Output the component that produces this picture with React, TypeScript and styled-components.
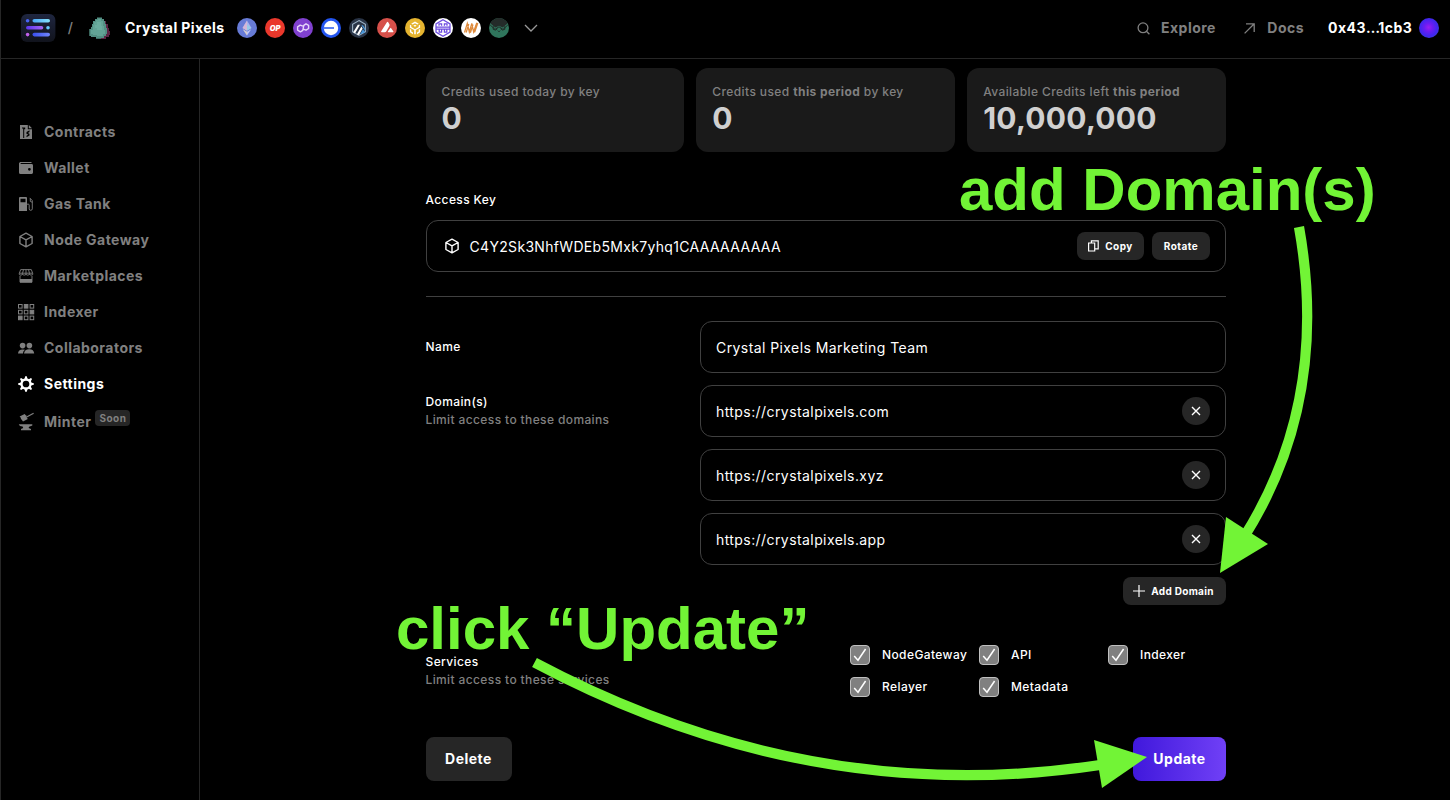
import React from "react";
import styled, { createGlobalStyle } from "styled-components";

const GlobalStyle = createGlobalStyle`
  *, *::before, *::after { box-sizing: border-box; }
  html, body { margin: 0; padding: 0; background: #000; }
  body { overflow: hidden; }
  button, input { font: inherit; letter-spacing: inherit; color: inherit; margin: 0; }
`;

const Page = styled.div`
  position: relative;
  width: 1450px;
  height: 800px;
  overflow: hidden;
  display: flex;
  flex-direction: column;
  background: #000;
  border-left: 1px solid #262626;
  color: #fff;
  font-family: Inter, "Liberation Sans", sans-serif;
  font-size: 14px;
  letter-spacing: 0.47px;
`;

/* ---------- header ---------- */

const Header = styled.header`
  flex: none;
  height: 59px;
  padding: 0 11px 2px 20px;
  display: flex;
  align-items: center;
  border-bottom: 1px solid #262626;
`;

const Slash = styled.span`
  width: 31px;
  padding: 0 2px 2px 0;
  text-align: center;
  color: #808080;
  font-weight: 500;
`;

const ProjectName = styled.span`
  margin-left: 14px;
  padding-bottom: 2px;
  width: 112px;
  font-weight: 700;
  letter-spacing: 0.42px;
  white-space: nowrap;
`;

const Chains = styled.div`
  display: flex;
  gap: 8px;
  margin-right: 15px;
`;

const HeaderRight = styled.nav`
  margin-left: auto;
  display: flex;
  align-items: center;
`;

const HeaderLink = styled.a<{ $gap: number; $end: number }>`
  display: flex;
  align-items: center;
  gap: ${(p) => p.$gap}px;
  margin-right: ${(p) => p.$end}px;
  color: #808080;
  font-weight: 700;
`;

const Raised = styled.span`
  padding-bottom: 2px;
`;

const Account = styled.div`
  display: flex;
  align-items: center;
  gap: 8px;
  font-weight: 700;
  white-space: nowrap;
`;

const Address = styled(Raised)`
  width: 83px;
`;

const Ellipsis = styled.span`
  letter-spacing: -1.8px;
`;

const Avatar = styled.span`
  width: 20px;
  height: 20px;
  border-radius: 50%;
  background: radial-gradient(circle at 48% 47%, #9a1ff0 0%, #6a1cf2 28%, #4126ee 58%, #3a50c0 100%);
`;

/* ---------- body ---------- */

const Body = styled.div`
  flex: 1;
  display: flex;
  min-height: 0;
`;

const Sidebar = styled.aside`
  width: 199px;
  border-right: 1px solid #262626;
  padding: 55px 0 0 15px;
  display: flex;
  flex-direction: column;
`;

const NavItem = styled.a<{ $active?: boolean }>`
  display: flex;
  align-items: center;
  height: 36px;
  gap: 8px;
  font-weight: 700;
  color: ${(p) => (p.$active ? "#fff" : "#808080")};
  svg { flex: none; }
`;

const MinterItem = styled(NavItem)`
  height: 40px;
`;

const MinterLabel = styled.span`
  display: flex;
  gap: 4px;
  align-items: flex-start;
  line-height: 18px;
  padding-bottom: 2px;
`;

const MinterText = styled.span`
  padding-top: 1px;
`;

const Soon = styled.span`
  width: 35px;
  height: 16px;
  margin-top: -2px;
  border-radius: 4px;
  background: #262626;
  font-size: 10px;
  line-height: 16px;
  text-align: center;
`;

const Main = styled.main`
  width: 800.5px;
  margin-left: 225.5px;
  padding-top: 9px;
  display: flex;
  flex-direction: column;
`;

const Cards = styled.section`
  display: grid;
  grid-template-columns: repeat(3, 1fr);
  gap: 12px;
`;

const Card = styled.div`
  height: 84px;
  padding: 14px 16px;
  border-radius: 12px;
  background: #1a1a1a;
`;

const CardLabel = styled.div`
  font-size: 12px;
  line-height: 19px;
  font-weight: 500;
  letter-spacing: 0.4px;
  color: #808080;
  white-space: nowrap;
  b { font-weight: 700; }
`;

const CardValue = styled.div`
  font-size: 30px;
  line-height: 34px;
  font-weight: 700;
  letter-spacing: 0.25px;
  color: #d0d0d0;
`;

const Label = styled.div`
  font-size: 12px;
  line-height: 18px;
  font-weight: 500;
  letter-spacing: 0.38px;
`;

const Hint = styled(Label)`
  color: #808080;
`;

const KeySection = styled.section`
  padding-top: 39px;
`;

const Field = styled.div`
  height: 52px;
  border: 1px solid #404040;
  border-radius: 12px;
  padding: 0 15px;
  display: flex;
  align-items: center;
  letter-spacing: 0.42px;
`;

const KeyField = styled(Field)`
  margin-top: 11px;
  gap: 8px;
`;

const KeyValue = styled.span`
  flex: 1;
  padding-top: 1px;
  letter-spacing: 0.32px;
`;

const SmallButton = styled.button<{ $width: number }>`
  width: ${(p) => p.$width}px;
  height: 28px;
  padding: 0;
  border: 0;
  border-radius: 8px;
  background: #262626;
  display: flex;
  align-items: center;
  justify-content: center;
  gap: 6px;
  font-size: 10px;
  font-weight: 700;
  letter-spacing: 0.45px;
`;

const Divider = styled.hr`
  width: 100%;
  height: 1px;
  margin: 24px 0;
  border: 0;
  background: #404040;
`;

const FormRow = styled.div`
  display: flex;
  justify-content: space-between;
`;

const LabelCell = styled.div<{ $top: number }>`
  padding-top: ${(p) => p.$top}px;
`;

const Fields = styled.div`
  width: 526px;
  display: flex;
  flex-direction: column;
  align-items: stretch;
  gap: 12px;
`;

const Input = styled.input`
  flex: 1;
  min-width: 0;
  padding: 0;
  border: 0;
  outline: 0;
  background: transparent;
`;

const RemoveButton = styled.button`
  width: 28px;
  height: 28px;
  padding: 0;
  border: 0;
  border-radius: 50%;
  background: #262626;
  display: grid;
  place-items: center;
`;

const AddButton = styled(SmallButton)`
  align-self: flex-end;
  padding-right: 2px;
  letter-spacing: 0.3px;
`;

const DomainRow = styled(FormRow)`
  margin-top: 12px;
`;

const ServicesRow = styled(FormRow)`
  margin-top: 40px;
  height: 52px;
`;

const Checks = styled.div`
  width: 376px;
  display: grid;
  grid-template-columns: 129px 129px 1fr;
  grid-auto-rows: 20px;
  row-gap: 12px;
`;

const Check = styled.label`
  display: flex;
  align-items: center;
  gap: 12px;
  font-size: 12px;
  font-weight: 500;
  letter-spacing: 0.4px;
`;

const Box = styled.span`
  width: 20px;
  height: 20px;
  border: 1px solid #c0c0c0;
  border-radius: 4px;
  background: #808080;
  display: grid;
  place-items: center;
`;

const Actions = styled.div`
  margin-top: 40px;
  display: flex;
  justify-content: space-between;
`;

const ActionButton = styled.button<{ $primary?: boolean }>`
  width: ${(p) => (p.$primary ? 93 : 86)}px;
  height: 44px;
  padding: 0 0 2px;
  border: 0;
  border-radius: 8px;
  font-weight: 700;
  letter-spacing: 0.5px;
  background: ${(p) => (p.$primary ? "linear-gradient(90deg, #4018dc, #7040f6)" : "#262626")};
`;

/* ---------- annotations floating over the page ---------- */

const Note = styled.div<{ $x: number; $y: number }>`
  position: absolute;
  left: ${(p) => p.$x}px;
  top: ${(p) => p.$y}px;
  font: 700 60px/68px "Liberation Sans", sans-serif;
  letter-spacing: 0;
  color: #72f436;
  white-space: nowrap;
`;

const Arrows = styled.svg`
  position: absolute;
  left: -1px;
  top: 0;
  pointer-events: none;
`;

/* ---------- icons ---------- */

const Logo = () => (
  <svg width="35" height="28" viewBox="0 0 35 28">
    <defs>
      <linearGradient id="lg" x1="0" y1="0" x2="0" y2="1"><stop stopColor="#1f2640" /><stop offset="1" stopColor="#11131c" /></linearGradient>
      <linearGradient id="l1"><stop stopColor="#4aa8f8" /><stop offset="1" stopColor="#86e4fc" /></linearGradient>
      <linearGradient id="l2"><stop stopColor="#5b35ee" /><stop offset="1" stopColor="#a666f4" /></linearGradient>
      <linearGradient id="l3"><stop stopColor="#3a50f0" /><stop offset="1" stopColor="#7186fa" /></linearGradient>
    </defs>
    <rect width="34.4" height="28" rx="6" fill="url(#lg)" />
    <circle cx="6.6" cy="6.8" r="1.8" fill="#4864f4" />
    <rect x="11.5" y="5" width="17.5" height="3.6" rx="1.8" fill="url(#l1)" />
    <rect x="5" y="12" width="17.3" height="3.6" rx="1.8" fill="url(#l2)" />
    <circle cx="27" cy="13.8" r="1.8" fill="#66c8fa" />
    <circle cx="6.6" cy="20.6" r="1.8" fill="#c060ea" />
    <rect x="11.5" y="18.8" width="17.5" height="3.6" rx="1.8" fill="url(#l3)" />
  </svg>
);

const Gem = () => (
  <svg width="24" height="24" viewBox="0 0 24 24">
    <path d="M14 3h3v2h2v3h2v4h1v3h1v4h-1v2h-3v2h-5z" fill="#5c2444" />
    <path d="M10 1.5h5V3h2v2h1v3h1v4h1v6h-1v2h-2v2h-3v.8H9V21H4v-1H2.3v-7H4v-2h1V8h1V5h2V3h2z" fill="#528f83" />
    <path d="M11 3h3v2h2v5h1v4h1v4h-2v2h-6v-1H6v-1H4v-4h2V9h1V6h2V4h2z" fill="#62a395" />
    <path d="M10 6h4v4h1v4h-5v-2H8V9h2z" fill="#6aac9e" />
  </svg>
);

const Coin = ({ bg, children }: { bg: string; children: React.ReactNode }) => (
  <svg width="20" height="20" viewBox="0 0 20 20"><circle cx="10" cy="10" r="10" fill={bg} />{children}</svg>
);

const OpText = styled.text`
  font: italic 900 7.5px Inter, sans-serif;
  letter-spacing: 0;
`;

const ChainIcons = () => (
  <Chains>
    <Coin bg="#677bd6">
      <path d="M10 2.5 14.5 10 10 12.7 5.5 10z" fill="#aab4ee" /><path d="M10 2.5v10.2L5.5 10z" fill="#e2b7d0" opacity=".75" />
      <path d="M10 6.5l4.5 3.5L10 12.7z" fill="#8adbe2" opacity=".6" /><path d="M5.8 11.2 10 13.8l4.2-2.6L10 17.4z" fill="#c0c6f6" /><path d="M10 13.8v3.6l-4.2-6.2z" fill="#e6d4ae" opacity=".6" />
    </Coin>
    <Coin bg="#ea382c"><OpText x="10" y="12.8" textAnchor="middle" fill="#fff">OP</OpText></Coin>
    <Coin bg="#8040cf">
      <path d="M9.9 8.2 7.2 7.2 4.6 8.9v3.2l2.8 1.7 2.4-1.5 1-5 2.2-1.5 2.6 1.5v3.2l-2.6 1.7-2.7-1.1" fill="none" stroke="#e6d5fa" strokeWidth="1.4" strokeLinejoin="round" />
    </Coin>
    <Coin bg="#2355f0"><circle cx="10" cy="10" r="7.2" fill="#fff" /><rect x="2.6" y="9.1" width="10.4" height="1.8" fill="#4c74f0" /></Coin>
    <Coin bg="#293446">
      <path d="M10 2.6 16.4 6.3v7.4L10 17.4 3.6 13.7V6.3z" fill="none" stroke="#9ab0c4" strokeWidth="1.1" />
      <path d="M4.2 14.2 8.8 6.8h2.2L6 15.4zM7.8 16.4 12.4 8.6l1.2 1.9-3.6 6.5z" fill="#fff" /><path d="M11 16.5l2.9-5.3 2.3 3.1zM12.4 7.2h1.6l2.2 3.6v2z" fill="#4898dc" />
    </Coin>
    <Coin bg="#d6504a"><path d="M9.9 4.2q.7-1 1.3 0l1.2 2.1q.4.8 0 1.6l-3.2 5.6q-.5.8-1.3.8H4.8q-1.2 0-.6-1.1zM13.2 10.2q.5-.8 1 0l2.1 3.1q.5 1-.5 1h-4.3q-1.1 0-.5-1z" fill="#fff" /></Coin>
    <Coin bg="#e5b42f">
      <path d="M10 3.6l3.8 2.1-1.4.9L10 5.3 7.6 6.6l-1.4-.9zM4.9 6.7l1.4.8v1.6L10 11.2l3.7-2.1V7.5l1.4-.8v3L10.8 12v4l-.8.6-.8-.6v-4L4.9 9.7zM4.9 11l1.4.8v1.8l1.7 1v1.6L4.9 14.3zM15.1 11l-1.4.8v1.8l-1.7 1v1.6l3.1-1.9zM10 6.8l1.6.9L10 8.7l-1.6-1z" fill="#fff" />
    </Coin>
    <Coin bg="#fff">
      <g fill="none" stroke="#6c4be0" strokeWidth="1.25"><path d="M10 1.8 17 5.9v8.2l-7 4.1-7-4.1V5.9z" /><path d="M3 9h14M3 11.2h14M6 7.8V5.8h2.6v2M11.4 7.8v-2H14v2M6.2 11.5v2.7h2.4v-2.7M11.4 11.5v2.7h2.4v-2.7" /></g>
    </Coin>
    <Coin bg="#fff">
      <g fill="none" stroke="#de8a3c" strokeWidth="1.25"><path d="M3.5 14.5 6.3 5.3l2 8.7L10.8 5.3l1.8 8.7 3.2-9.2M5.2 14.5 7.8 6M9.4 14.8 12 6.5M13.6 14.4 16.8 5" /></g>
    </Coin>
    <Coin bg="#2f755c">
      <path d="M2 4.1A10 10 0 0 1 18 4.1l.8 1.4L14 9.8 10 7.8 6 9.8 1.2 5.5z" fill="#242b29" />
      <path d="M1 5.6 7.2 10.6l2.8-2 2.8 2L19 5.6" fill="none" stroke="#2f755c" strokeWidth=".8" />
      <path d="M1.2 7 6 11.4l4-2.6 4 2.6L18.8 7M4.2 8.2v3.1l2.3.8 1.9-1.4M15.8 8.2v3.1l-2.3.8-1.9-1.4M8.9 12.6 10 13.8l1.1-1.2" fill="none" stroke="#202b27" strokeWidth="1" />
    </Coin>
  </Chains>
);

const Icon = ({ children }: { children: React.ReactNode }) => (
  <svg width="20" height="20" viewBox="0 0 20 20" fill="currentColor">{children}</svg>
);

const ContractsIcon = () => (
  <Icon>
    <path fillRule="evenodd" d="M4 3h7.8v4.2H16V17H4zM6 5.5v1h1.2V16h1V7.2h1V5.5zM13.5 8.2l-3 1.9v1.8l1.8.6-1.8 1.2v1.6l3-1.9v-1.6l-1.6-.7 1.6-1z" /><path d="M12.8 3 16 6.2h-3.2z" />
  </Icon>
);
const WalletIcon = () => (
  <Icon><path d="M5 4h10.5v1.1H5a.7.7 0 0 0 0 1.3h-2V5.6C3 4.7 3.9 4 5 4z" /><path fillRule="evenodd" d="M3 6h12.6q1.4 0 1.4 1.4v7.2q0 1.4-1.4 1.4H4.6Q3 16 3 14.4zm10.4 3.9a1.4 1.4 0 1 0 0 2.8 1.4 1.4 0 0 0 0-2.8z" /></Icon>
);
const GasIcon = () => (
  <Icon><path fillRule="evenodd" d="M3 4q0-1 1-1h6q1 0 1 1v13H3zm1.5.8v3.4h5V4.8z" /><path d="M11 10.2h1.4q.8 0 .8.9v3.8q0 1.4 1.5 1.4t1.6-1.4V6.6l-2.6-2.7M14.3 4.7v2.7l2 .9" fill="none" stroke="currentColor" strokeWidth=".9" /></Icon>
);
const CubeIcon = () => (
  <Icon><path d="M10 3.2 16.1 6.5v7L10 16.8 3.9 13.5v-7zM3.9 6.5 10 9.9l6.1-3.4M10 9.9v6.9" fill="none" stroke="currentColor" strokeWidth="1.4" strokeLinejoin="round" /></Icon>
);
const MarketIcon = () => (
  <Icon>
    <g fill="none" stroke="currentColor" strokeWidth=".9"><path d="M4.7 3.6h10.6l1.4 3.8v1.1q-1.6 1.3-3.2 0-1.8 1.3-3.5 0-1.8 1.3-3.5 0-1.6 1.3-3.2 0V7.4zM7.5 3.6l-1 3.8v1.1M10 3.6v4.9M12.5 3.6l1 3.8v1.1M3.3 7.2h13.4M4 9.8v6.4h12V9.8" /></g><rect x="4" y="13" width="12" height="3.5" />
  </Icon>
);
const IndexerIcon = () => (
  <Icon>
    {[0, 1, 2].map((r) => [0, 1, 2].map((c) => (
      <rect key={`${r}${c}`} x={2.5 + c * 5.8} y={2.5 + r * 5.8} width="3.6" height="3.6" stroke="currentColor" strokeWidth="1" fill={[1, 5, 6].includes(r * 3 + c) ? "currentColor" : "none"} />
    )))}
  </Icon>
);
const PeopleIcon = () => (
  <Icon><circle cx="6.6" cy="7.6" r="2.8" /><circle cx="13.4" cy="7.6" r="2.8" /><path d="M2 15.6q.3-4.2 4.7-4.2 1.3 0 2.3.4-2 1.3-2.1 3.8zM8 15.6q.5-4.4 5.2-4.4t5 4.4z" /></Icon>
);
const GearIcon = () => (
  <Icon>
    <g>{Array.from({ length: 8 }, (_, i) => <path key={i} d="M8.2 6 9.2 2.2h1.6L11.8 6z" transform={`rotate(${i * 45} 10 10)`} />)}</g>
    <circle cx="10" cy="10" r="4.5" fill="none" stroke="currentColor" strokeWidth="2.3" />
  </Icon>
);
const MinterIcon = () => (
  <Icon>
    <path d="M3.6 4.4 8.7 2l1 1.3 1 .5-.5.9 1.6 2.3L7 9.4 5.6 7.6l-.8-.5.2-1z" /><path d="M10.2 5.2 17.6 1.2" stroke="currentColor" strokeWidth="1.2" /><path d="M2.8 12.3h13.5v1.2l-3.2 1.2-.5 1.3 2.4 1v1.3H5V17l2.2-1-.6-1.4-2.7-.6z" />
  </Icon>
);

const CopyIcon = () => (
  <svg width="11" height="12" viewBox="0 0 11 12" fill="none" stroke="#fff" strokeWidth="1.2"><path d="M.6 3h6.1v8H.6zM3.4 3V.8h6.8v8.1H6.7" /></svg>
);
const PlusIcon = () => (
  <svg width="12" height="12" viewBox="0 0 12 12" stroke="#fff" strokeWidth="1.2"><path d="M0 6h12M6 0v12" /></svg>
);
const CloseIcon = () => (
  <svg width="10" height="10" viewBox="0 0 10 10" stroke="#fff" strokeWidth="1.4"><path d="M1 1l8 8M9 1 1 9" /></svg>
);
const CheckIcon = () => (
  <svg width="14" height="14" viewBox="0 0 14 14" fill="none" stroke="#fff" strokeWidth="1.5"><path d="M1.2 8 5 12.2 12.6 1" /></svg>
);

/* ---------- content ---------- */

const nav = [
  { label: "Contracts", icon: <ContractsIcon /> },
  { label: "Wallet", icon: <WalletIcon /> },
  { label: "Gas Tank", icon: <GasIcon /> },
  { label: "Node Gateway", icon: <CubeIcon /> },
  { label: "Marketplaces", icon: <MarketIcon /> },
  { label: "Indexer", icon: <IndexerIcon /> },
  { label: "Collaborators", icon: <PeopleIcon /> },
  { label: "Settings", icon: <GearIcon />, active: true },
];

const domains = ["https://crystalpixels.com", "https://crystalpixels.xyz", "https://crystalpixels.app"];
const services = ["NodeGateway", "API", "Indexer", "Relayer", "Metadata"];

export default function App() {
  return (
    <Page>
      <GlobalStyle />
      <Header>
        <Logo />
        <Slash>/</Slash>
        <Gem />
        <ProjectName>Crystal Pixels</ProjectName>
        <ChainIcons />
        <svg width="14" height="8" viewBox="0 0 14 8" fill="none" stroke="#999" strokeWidth="1.3"><path d="M1 1l6 6 6-6" /></svg>
        <HeaderRight>
          <HeaderLink $gap={11} $end={28.5}>
            <svg width="13" height="13" viewBox="0 0 13 13" fill="none" stroke="currentColor" strokeWidth="1.3"><circle cx="6" cy="5.8" r="4.9" /><path d="M9.4 9.3 12.4 12.3" /></svg>
            <Raised>Explore</Raised>
          </HeaderLink>
          <HeaderLink $gap={12} $end={24}>
            <svg width="11" height="11" viewBox="0 0 11 11" fill="none" stroke="currentColor" strokeWidth="1.3"><path d="M.6 10.4 10 1M2 .9h8.2v8" /></svg>
            <Raised>Docs</Raised>
          </HeaderLink>
          <Account><Address>0x43<Ellipsis>…</Ellipsis>1cb3</Address><Avatar /></Account>
        </HeaderRight>
      </Header>
      <Body>
        <Sidebar>
          {nav.map((n) => (
            <NavItem key={n.label} $active={n.active}>{n.icon}<Raised>{n.label}</Raised></NavItem>
          ))}
          <MinterItem>
            <MinterIcon />
            <MinterLabel><MinterText>Minter</MinterText><Soon>Soon</Soon></MinterLabel>
          </MinterItem>
        </Sidebar>
        <Main>
          <Cards>
            <Card><CardLabel>Credits used today by key</CardLabel><CardValue>0</CardValue></Card>
            <Card><CardLabel>Credits used <b>this period</b> by key</CardLabel><CardValue>0</CardValue></Card>
            <Card><CardLabel>Available Credits left <b>this period</b></CardLabel><CardValue>10,000,000</CardValue></Card>
          </Cards>
          <KeySection>
            <Label>Access Key</Label>
            <KeyField>
              <CubeIcon />
              <KeyValue>C4Y2Sk3NhfWDEb5Mxk7yhq1CAAAAAAAAA</KeyValue>
              <SmallButton $width={67}><CopyIcon />Copy</SmallButton>
              <SmallButton $width={58}>Rotate</SmallButton>
            </KeyField>
          </KeySection>
          <Divider />
          <FormRow>
            <LabelCell $top={17}><Label>Name</Label></LabelCell>
            <Fields><Field><Input defaultValue="Crystal Pixels Marketing Team" /></Field></Fields>
          </FormRow>
          <DomainRow>
            <LabelCell $top={8}><Label>Domain(s)</Label><Hint>Limit access to these domains</Hint></LabelCell>
            <Fields>
              {domains.map((d) => (
                <Field key={d}><Input defaultValue={d} /><RemoveButton><CloseIcon /></RemoveButton></Field>
              ))}
              <AddButton $width={103}><PlusIcon />Add Domain</AddButton>
            </Fields>
          </DomainRow>
          <ServicesRow>
            <LabelCell $top={8}><Label>Services</Label><Hint>Limit access to these services</Hint></LabelCell>
            <Checks>
              {services.map((s) => (
                <Check key={s}><Box><CheckIcon /></Box><Raised>{s}</Raised></Check>
              ))}
            </Checks>
          </ServicesRow>
          <Actions>
            <ActionButton>Delete</ActionButton>
            <ActionButton $primary>Update</ActionButton>
          </Actions>
        </Main>
      </Body>
      <Note $x={958} $y={156}>add Domain(s)</Note>
      <Note $x={395} $y={595}>click “Update”</Note>
      <Arrows width="1450" height="800" viewBox="0 0 1450 800" fill="none" stroke="#72f436" strokeWidth="10.2">
        <path d="M1299 227Q1330 401 1244 537" />
        <path d="M1226 517 1268 544 1220 573z" fill="#72f436" stroke="none" />
        <path d="M534.5 662.5Q810 809 1100 765" />
        <path d="M1094 740 1147 757 1102 788z" fill="#72f436" stroke="none" />
      </Arrows>
    </Page>
  );
}
